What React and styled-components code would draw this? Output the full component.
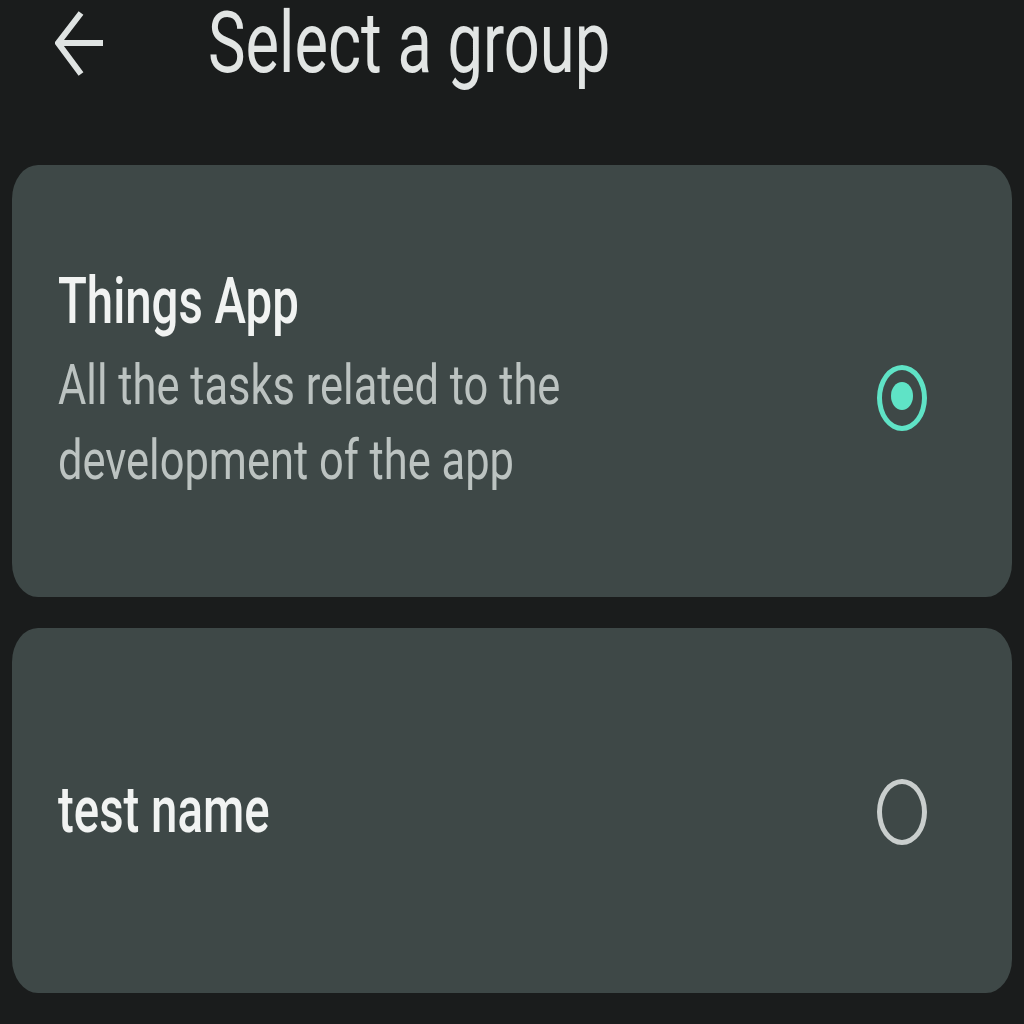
import React from 'react';
import styled, { createGlobalStyle } from 'styled-components';

const Global = createGlobalStyle`
  html, body {
    margin: 0;
    padding: 0;
    background: #1a1c1c;
    font-family: Roboto, "Noto Sans", sans-serif;
  }
`;

const Page = styled.div`
  width: 1024px;
  height: 1024px;
  overflow: hidden;
  background: #1a1c1c;
  display: flex;
  flex-direction: column;
`;

const TopBar = styled.header`
  height: 134px;
  display: flex;
  align-items: flex-start;
  padding: 3px 0 0 55px;
  box-sizing: border-box;
`;

const BackButton = styled.button`
  background: transparent;
  border: none;
  padding: 0;
  margin-top: 7px;
  width: 50px;
  height: 68px;
  cursor: pointer;
  svg { display: block; }
`;

const Title = styled.h1`
  margin: 0 0 0 103px;
  font-size: 86px;
  line-height: 80px;
  font-weight: 400;
  color: #e2e5e4;
  transform: scaleX(0.735);
  transform-origin: left center;
  white-space: nowrap;
`;

const List = styled.div`
  display: flex;
  flex-direction: column;
  gap: 31px;
  padding: 31px 12px 0;
`;

const Card = styled.div`
  height: ${p => p.h}px;
  background: #3e4847;
  border-radius: 26px / 34px;
  display: flex;
  align-items: center;
  justify-content: space-between;
  padding: 0 85px 0 46px;
  box-sizing: border-box;
`;

const TextBlock = styled.div`
  white-space: nowrap;
`;

const Name = styled.div`
  font-size: 64px;
  line-height: 76px;
  font-weight: 500;
  color: #f1f3f2;
  transform: scaleX(0.74);
  transform-origin: left center;
`;

const Desc = styled.div`
  margin-top: 8px;
  font-size: 55px;
  line-height: 75px;
  font-weight: 400;
  color: #bcc3c1;
  transform: scaleX(0.79);
  transform-origin: left center;
`;

const Radio = styled.span`
  width: 40px;
  height: 56px;
  border-radius: 50%;
  border: 5px solid ${p => (p.checked ? '#5fe3c6' : '#c9cecd')};
  display: flex;
  align-items: center;
  justify-content: center;
  flex-shrink: 0;
  margin-top: ${p => p.offset || 0}px;

  &::after {
    content: '';
    display: ${p => (p.checked ? 'block' : 'none')};
    width: 22px;
    height: 28px;
    margin-top: -4px;
    border-radius: 50%;
    background: #5fe3c6;
  }
`;

const groups = [
  {
    name: 'Things App',
    desc: ['All the tasks related to the', 'development of the app'],
    checked: true,
    h: 432,
    offset: 34,
  },
  { name: 'test name', desc: null, checked: false, h: 365, offset: 2 },
];

export default function App() {
  return (
    <Page>
      <Global />
      <TopBar>
        <BackButton aria-label="Back">
          <svg width="50" height="68" viewBox="0 0 50 68" fill="none">
            <path
              d="M48 33 H4 M26 3 L3 33 L26 64"
              stroke="#dfe3e2"
              strokeWidth="6"
              strokeLinecap="butt"
              strokeLinejoin="miter"
            />
          </svg>
        </BackButton>
        <Title>Select a group</Title>
      </TopBar>
      <List>
        {groups.map(g => (
          <Card key={g.name} h={g.h}>
            <TextBlock>
              <Name>{g.name}</Name>
              {g.desc && (
                <Desc>
                  {g.desc[0]}
                  <br />
                  {g.desc[1]}
                </Desc>
              )}
            </TextBlock>
            <Radio checked={g.checked} offset={g.offset} />
          </Card>
        ))}
      </List>
    </Page>
  );
}
